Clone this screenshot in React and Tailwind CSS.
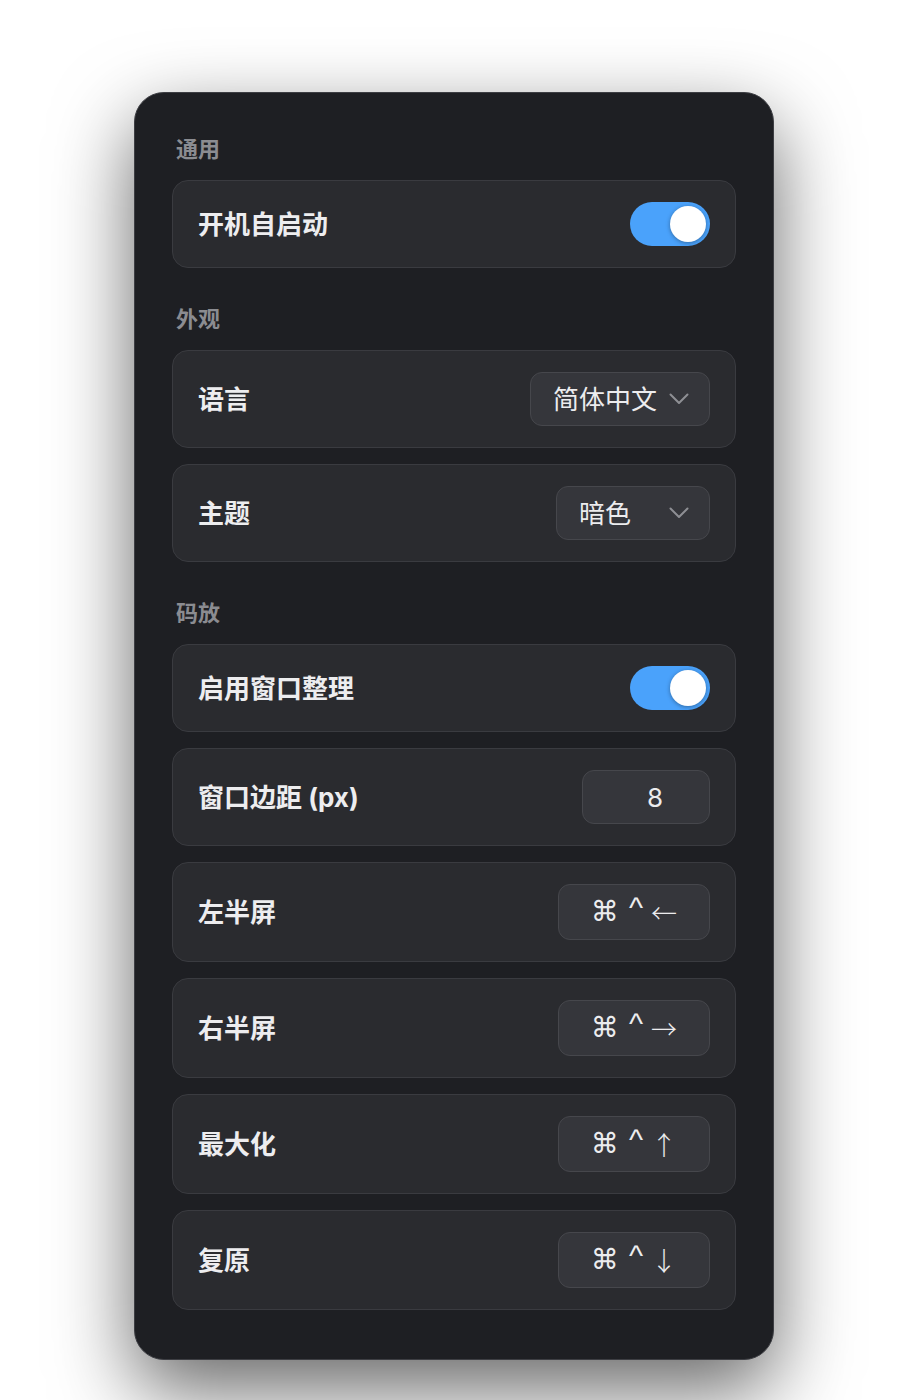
const FONT = "font-['Inter','Noto_Sans_CJK_SC',sans-serif]";

function Toggle() {
  return (
    <div className="flex h-[44px] w-[80px] items-center justify-end rounded-full bg-[#4aa2fb] p-[4px]">
      <div className="h-[36px] w-[36px] rounded-full bg-white shadow-[0_1px_4px_rgba(0,0,0,0.35)]" />
    </div>
  );
}

function Chevron() {
  return (
    <svg width="20" height="12" viewBox="0 0 20 12" fill="none">
      <path d="M1.5 1.5L10 10L18.5 1.5" stroke="#8e8f94" strokeWidth="2" strokeLinecap="round" strokeLinejoin="round" />
    </svg>
  );
}

function Select({ value, width }) {
  return (
    <div className={`flex h-[54px] items-center justify-between rounded-[12px] border border-[#46474c] bg-[#35363b] pl-[22px] pr-[20px] ${width}`}>
      <span className="text-[26px] text-[#ececee]">{value}</span>
      <Chevron />
    </div>
  );
}

function KeyBox({ keys }) {
  return (
    <div className="flex h-[56px] w-[152px] items-center justify-center rounded-[12px] border border-[#46474c] bg-[#35363b] leading-none text-[#ececee]">
      <span className="font-['DejaVu_Sans',sans-serif] text-[28px]">⌘</span>
      <span className="ml-[10px] font-['Liberation_Sans',sans-serif] text-[30px] -translate-y-[4px]">^</span>
      <span className="ml-[8px] font-['Noto_Sans_CJK_SC',sans-serif] text-[26px] font-light">{keys}</span>
    </div>
  );
}

function Row({ label, children }) {
  return (
    <div className="flex items-center justify-between rounded-[16px] border border-[#3a3b40] bg-[#2a2b2f] px-[25px] py-[21px]">
      <span className="text-[26px] font-bold text-[#ededef]">{label}</span>
      {children}
    </div>
  );
}

function Section({ title, children }) {
  return (
    <div>
      <div className="mb-[17px] h-[28px] pl-[4px] text-[22px] leading-[28px] font-bold text-[#8b8c91]">{title}</div>
      <div className="flex flex-col gap-[16px]">{children}</div>
    </div>
  );
}

export default function App() {
  return (
    <div className={`min-h-[1400px] w-full bg-white pt-[92px] ${FONT}`}>
      <div className="mx-auto flex w-[640px] flex-col gap-[37px] rounded-[30px] border border-[#3d3e43] bg-[#1e1f23] px-[37px] pt-[42px] pb-[49px] shadow-[0_30px_80px_rgba(0,0,0,0.6)]">
        <Section title="通用">
          <Row label="开机自启动">
            <Toggle />
          </Row>
        </Section>
        <Section title="外观">
          <Row label="语言">
            <Select value="简体中文" width="w-[180px]" />
          </Row>
          <Row label="主题">
            <Select value="暗色" width="w-[154px]" />
          </Row>
        </Section>
        <Section title="码放">
          <Row label="启用窗口整理">
            <Toggle />
          </Row>
          <Row label="窗口边距 (px)">
            <div className="flex h-[54px] w-[128px] items-center justify-center rounded-[12px] border border-[#46474c] bg-[#35363b] pl-[18px] text-[26px] text-[#ececee]">
              8
            </div>
          </Row>
          <Row label="左半屏">
            <KeyBox keys="←" />
          </Row>
          <Row label="右半屏">
            <KeyBox keys="→" />
          </Row>
          <Row label="最大化">
            <KeyBox keys="↑" />
          </Row>
          <Row label="复原">
            <KeyBox keys="↓" />
          </Row>
        </Section>
      </div>
    </div>
  );
}
